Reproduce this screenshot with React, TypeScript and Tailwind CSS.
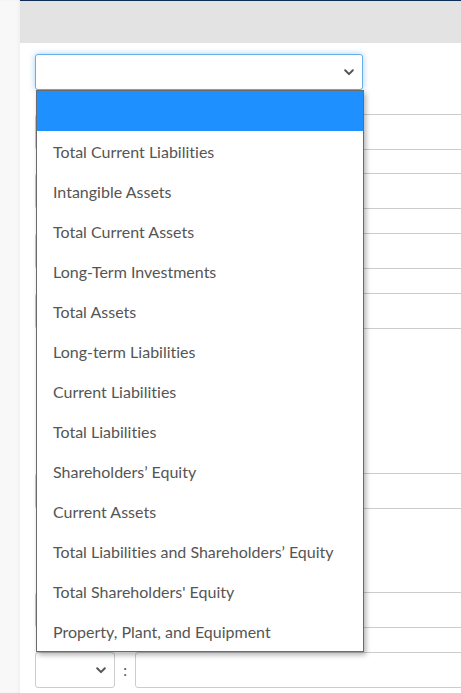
import React from "react";

const items = [
  "Total Current Liabilities",
  "Intangible Assets",
  "Total Current Assets",
  "Long-Term Investments",
  "Total Assets",
  "Long-term Liabilities",
  "Current Liabilities",
  "Total Liabilities",
  "Shareholders’ Equity",
  "Current Assets",
  "Total Liabilities and Shareholders’ Equity",
  "Total Shareholders' Equity",
  "Property, Plant, and Equipment",
];

function Chevron() {
  return (
    <svg width="10" height="7" viewBox="0 0 10 7" fill="none">
      <path d="M1.2 1.3 5 5.1 8.8 1.3" stroke="#555" strokeWidth="2" strokeLinecap="round" strokeLinejoin="round" />
    </svg>
  );
}

function Row({ className = "", colon = false }: { className?: string; colon?: boolean }) {
  return (
    <div className={`flex items-center h-[36px] ${className}`}>
      <div className="w-[80px] h-[36px] border border-[#ccc] rounded-[3px] bg-white flex items-center justify-end pr-[8px]">
        <Chevron />
      </div>
      <div className="w-[20px] text-center text-[#555] text-[15px]">{colon ? ":" : ""}</div>
      <div className="flex-1 h-[36px] border border-[#ccc] rounded-[3px] bg-white mr-[-10px]" />
    </div>
  );
}

export default function App() {
  return (
    <div
      className="relative w-[461px] h-[693px] overflow-hidden bg-white flex"
      style={{ fontFamily: "Lato, 'Open Sans', sans-serif", fontVariantLigatures: "none" }}
    >
      <div className="w-[20px] shrink-0 bg-[#f8f8f8] shadow-[inset_-2px_0_3px_rgba(0,0,0,0.03)]" />
      <div className="flex-1 flex flex-col">
        <div className="h-[43px] bg-[#e3e3e3] border-t border-[#0b2d57]" />
        <div className="pl-[15px] pt-[11px] flex flex-col">
          <div className="w-[328px] h-[36px] border border-[#66afe9] rounded-[3px] bg-white shadow-[0_0_6px_rgba(102,175,233,0.6)] flex items-center justify-end pr-[8px]">
            <Chevron />
          </div>
          <Row className="mt-[24px]" />
          <Row className="mt-[23px]" />
          <Row className="mt-[24px]" />
          <Row className="mt-[24px]" />
          <Row className="mt-[144px]" />
          <Row className="mt-[83px]" />
          <Row className="mt-[24px]" colon />
        </div>
      </div>

      <div className="absolute left-[36px] top-[90px] w-[328px] border border-[#6b6b6b] bg-white shadow-[2px_3px_5px_rgba(0,0,0,0.3)]">
        <div className="h-[40px] bg-[#1e90ff]" />
        {items.map((t) => (
          <div key={t} className="h-[40px] flex items-center pl-[16px] pt-[1px] text-[16px] text-[#555] whitespace-nowrap">
            {t}
          </div>
        ))}
      </div>
    </div>
  );
}
